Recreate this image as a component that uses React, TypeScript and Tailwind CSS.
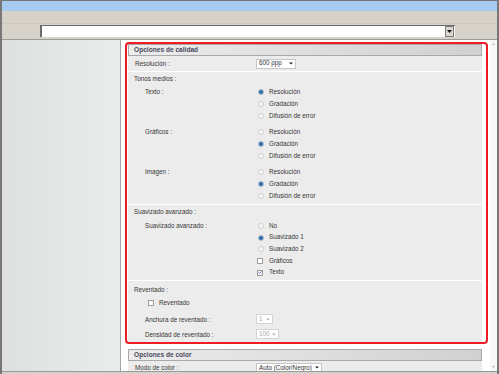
import React from "react";

type Opt = { label: string; checked?: boolean; kind?: "radio" | "check" };

function Radio({ checked }: { checked?: boolean }) {
  return checked ? (
    <span className="ml-[2px] flex h-[6px] w-[6px] shrink-0 items-center justify-center rounded-full border border-[#9fb7cf] bg-[#dbe6f1]">
      <span className="h-[4px] w-[4px] rounded-full bg-[#2f6aa6]" />
    </span>
  ) : (
    <span className="ml-[2px] h-[6px] w-[6px] shrink-0 rounded-full border border-[#cfcfcf] bg-[#f6f6f6]" />
  );
}

function Check({ checked }: { checked?: boolean }) {
  return (
    <span className="ml-[1px] flex h-[6px] w-[6px] shrink-0 items-center justify-center border border-[#9c9c9c] bg-white">
      {checked && (
        <svg width="5" height="5" viewBox="0 0 5 5">
          <path d="M0.6 2.6 L1.9 3.9 L4.4 0.8" fill="none" stroke="#3157a8" strokeWidth="1" />
        </svg>
      )}
    </span>
  );
}

function Select({ value, width, disabled }: { value: string; width: string; disabled?: boolean }) {
  return (
    <div
      className={`flex h-[10px] items-center justify-between border bg-white pl-[2px] pr-[2px] ${width} ${
        disabled ? "border-[#d4d4d4] text-[#ababab]" : "border-[#c6c6c6] text-[#333]"
      }`}
    >
      <span className="leading-none">{value}</span>
      <svg width="4" height="3" viewBox="0 0 4 3">
        <path d="M0 0.5 H4 L2 2.6 Z" fill={disabled ? "#b4b4b4" : "#222"} />
      </svg>
    </div>
  );
}

function OptGroup({ label, opts, line = "h-[12px]", className = "" }: { label: string; opts: Opt[]; line?: string; className?: string }) {
  return (
    <div className={`flex ${className}`}>
      <div className={`flex w-[128px] shrink-0 items-center pl-[17px] ${line}`}>{label}</div>
      <div className="flex flex-col">
        {opts.map((o) => (
          <div key={o.label} className={`flex items-center gap-[5px] ${line}`}>
            {o.kind === "check" ? (
              <>
                <Check checked={o.checked} />
                <span className="ml-[1px] leading-none">{o.label}</span>
              </>
            ) : (
              <>
                <Radio checked={o.checked} />
                <span className="leading-none">{o.label}</span>
              </>
            )}
          </div>
        ))}
      </div>
    </div>
  );
}

function Header({ title }: { title: string }) {
  return (
    <div className="flex h-[12px] items-center border border-[#a9a9a9] bg-gradient-to-r from-[#ececec] to-[#d1d1d1] pl-[5px] text-[6.6px] font-bold text-[#4a4a60]">
      {title}
    </div>
  );
}

const halftone = (sel: number): Opt[] => [
  { label: "Resolución", checked: sel === 0 },
  { label: "Gradación", checked: sel === 1 },
  { label: "Difusión de error", checked: sel === 2 },
];

export default function App() {
  return (
    <div className="flex h-[374px] w-[499px] flex-col overflow-hidden border-x-2 border-t border-[#777] bg-[#d6d2ca] font-['Liberation_Sans',Arial,sans-serif] text-[6.3px] text-[#363636]">
      {/* barra de título */}
      <div className="h-[10px] bg-[#a7caf0]" />
      <div className="h-[13px] border-b border-[#cbc6be] bg-[#d6d2ca]" />

      {/* barra de dirección */}
      <div className="flex h-[15px] items-start">
        <div className="ml-[38px] mt-[1px] flex h-[12px] w-[415px] items-stretch justify-end border-l-2 border-t border-[#6c6c6c] bg-white">
          <div className="mr-[1px] flex w-[9px] items-center justify-center border border-[#7c7c7c] bg-[#dcd8d0]">
            <svg width="5" height="3" viewBox="0 0 5 3">
              <path d="M0 0 H5 L2.5 3 Z" fill="#111" />
            </svg>
          </div>
        </div>
      </div>

      <div className="flex h-[333px] border-y border-[#9a9a9a]">
        {/* panel izquierdo */}
        <div className="w-[119px] shrink-0 border-r border-[#a5a5a5] bg-gradient-to-r from-[#dedfdf] to-[#ebecec]" />

        {/* contenido */}
        <div className="w-[369px] shrink-0 overflow-hidden bg-white pt-[2px]">
          <div className="ml-[4px] w-[363px] rounded-[4px] border-2 border-[#ee1c24] pl-[1px] pr-[4px]">
            <Header title="Opciones de calidad" />
            <div className="bg-[#ececec]">
              <div className="flex h-[15px] items-center">
                <div className="w-[128px] shrink-0 pl-[7px]">Resolución :</div>
                <Select value="600 ppp" width="w-[40px]" />
              </div>
              <div className="h-px bg-white" />

              <div className="pb-[2px] pt-[1px]">
                <div className="flex h-[12px] items-center pl-[6px]">Tonos medios :</div>
                <OptGroup className="mt-[1px]" label="Texto :" opts={halftone(0)} />
                <OptGroup className="mt-[4px]" label="Gráficos :" opts={halftone(1)} />
                <OptGroup className="mt-[4px]" label="Imagen :" opts={halftone(1)} />
              </div>
              <div className="h-px bg-white" />

              <div className="pb-[2px] pt-[1px]">
                <div className="flex h-[12px] items-center pl-[6px]">Suavizado avanzado :</div>
                <OptGroup
                  className="mt-[2px]"
                  line="h-[11.7px]"
                  label="Suavizado avanzado :"
                  opts={[
                    { label: "No" },
                    { label: "Suavizado 1", checked: true },
                    { label: "Suavizado 2" },
                    { label: "Gráficos", kind: "check" },
                    { label: "Texto", kind: "check", checked: true },
                  ]}
                />
              </div>
              <div className="h-px bg-white" />

              <div className="pb-[2px] pt-[2px]">
                <div className="flex h-[12px] items-center pl-[6px]">Reventado :</div>
                <div className="mt-[2px] flex h-[12px] items-center gap-[5px] pl-[19px]">
                  <Check />
                  <span className="leading-none">Reventado</span>
                </div>
                <div className="mt-[4px] flex h-[12px] items-center">
                  <div className="w-[128px] shrink-0 pl-[17px]">Anchura de reventado :</div>
                  <Select value="1" width="w-[17px]" disabled />
                </div>
                <div className="mt-[3px] flex h-[12px] items-center">
                  <div className="w-[128px] shrink-0 pl-[17px]">Densidad de reventado :</div>
                  <Select value="100" width="w-[23px]" disabled />
                </div>
              </div>
            </div>
          </div>

          <div className="ml-[7px] mt-[5px] w-[354px]">
            <Header title="Opciones de color" />
            <div className="flex h-[13px] items-center bg-[#ececec]">
              <div className="w-[128px] shrink-0 pl-[7px] leading-none">Modo de color :</div>
              <Select value="Auto (Color/Negro)" width="w-[66px]" />
            </div>
          </div>
        </div>

        {/* barra de desplazamiento */}
        <div className="flex w-[7px] shrink-0 flex-col items-center justify-between bg-[#f8f8f8] py-[3px]">
          <svg width="3" height="2" viewBox="0 0 3 2">
            <path d="M0 2 H3 L1.5 0 Z" fill="#b8b8b8" />
          </svg>
          <svg width="3" height="2" viewBox="0 0 3 2">
            <path d="M0 0 H3 L1.5 2 Z" fill="#b8b8b8" />
          </svg>
        </div>
      </div>
    </div>
  );
}
